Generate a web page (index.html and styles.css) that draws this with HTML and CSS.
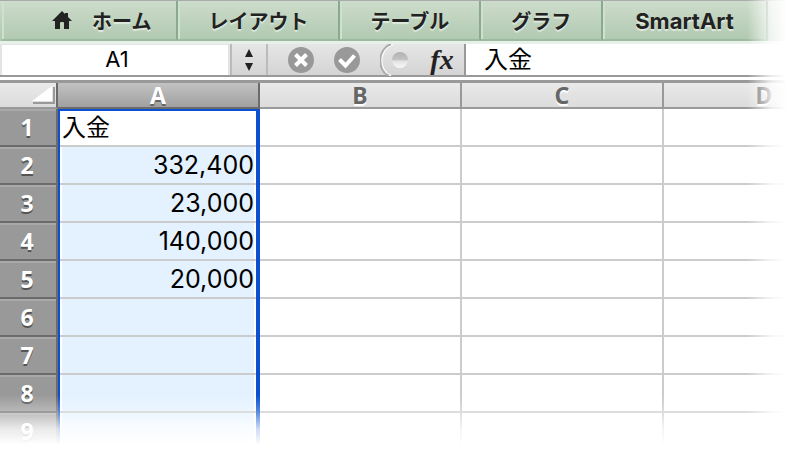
FILE: index.html
```html
<!DOCTYPE html>
<html lang="ja">
<head>
    <meta charset="UTF-8">
    <meta name="viewport" content="width=device-width, initial-scale=1.0">
    <title>入金</title>
    <link rel="stylesheet" href="styles.css">
</head>
<body>
    <div class="window">
        <nav class="tabs">
            <button type="button" class="tab home">
                <svg width="20" height="18" viewBox="0 0 20 18"><path d="M10 0 0 10h3v8h5v-6q0-1 1-1h2q1 0 1 1v6h5v-8h3l-4-4V2h-3v1z" fill="#222"/></svg>
                ホーム
            </button>
            <button type="button" class="tab">レイアウト</button>
            <button type="button" class="tab">テーブル</button>
            <button type="button" class="tab">グラフ</button>
            <button type="button" class="tab">SmartArt</button>
        </nav>

        <div class="formula-bar">
            <input type="text" class="name-box" aria-label="名前ボックス" value="A1">
            <button type="button" class="stepper" aria-label="セルの選択">
                <svg width="10" height="22" viewBox="0 0 10 22"><path d="M5 0 9 8H1zM1 14h8l-4 8z" fill="#222"/></svg>
            </button>
            <div class="tools">
                <button type="button" aria-label="キャンセル">
                    <svg width="26" height="26" viewBox="0 0 26 26"><circle cx="13" cy="13" r="13" fill="#999"/><path d="m7.500 7.500 11 11m0-11-11 11" stroke="#fff" stroke-width="4"/></svg>
                </button>
                <button type="button" aria-label="入力">
                    <svg width="26" height="26" viewBox="0 0 26 26"><circle cx="13" cy="13" r="13" fill="#999"/><path d="m5.500 12.500 6 6 9-10" fill="none" stroke="#fff" stroke-width="4"/></svg>
                </button>
                <svg class="toggle" width="30" height="32" viewBox="0 0 30 32">
                    <defs>
                        <linearGradient id="knob" x2="0" y2="1">
                            <stop offset="0" stop-color="#b2b2b2"/>
                            <stop offset=".5" stop-color="#c4c4c4"/>
                            <stop offset=".55" stop-color="#e0e2e4"/>
                            <stop offset="1" stop-color="#f6f8fa"/>
                        </linearGradient>
                    </defs>
                    <path d="M13 0C-2 5-2 27 11 32" fill="none" stroke="#fafafa" stroke-width="2"/>
                    <path d="M11 0C-3 5-3 27 9 32" fill="none" stroke="#aaa" stroke-width="2"/>
                    <circle cx="20" cy="16" r="8" fill="url(#knob)"/>
                </svg>
                <button type="button" class="fx">fx</button>
            </div>
            <input type="text" class="formula" aria-label="数式" value="入金">
        </div>

        <div class="sheet">
            <table>
                <colgroup>
                    <col class="col-head">
                    <col span="4" class="col-data">
                </colgroup>
                <thead>
                    <tr>
                        <th class="corner"><svg width="23" height="18" viewBox="0 0 23 18"><path d="M22 1v16H1" fill="none" stroke="#999" stroke-width="2"/><path d="M20 0v15H0z" fill="#fff"/></svg></th>
                        <th class="active">A</th>
                        <th>B</th>
                        <th>C</th>
                        <th>D</th>
                    </tr>
                </thead>
                <tbody>
                    <tr><th>1</th><td>入金</td><td></td><td></td><td></td></tr>
                    <tr><th>2</th><td class="selected">332,400</td><td></td><td></td><td></td></tr>
                    <tr><th>3</th><td class="selected">23,000</td><td></td><td></td><td></td></tr>
                    <tr><th>4</th><td class="selected">140,000</td><td></td><td></td><td></td></tr>
                    <tr><th>5</th><td class="selected">20,000</td><td></td><td></td><td></td></tr>
                    <tr><th>6</th><td class="selected"></td><td></td><td></td><td></td></tr>
                    <tr><th>7</th><td class="selected"></td><td></td><td></td><td></td></tr>
                    <tr><th>8</th><td class="selected"></td><td></td><td></td><td></td></tr>
                    <tr><th>9</th><td class="selected"></td><td></td><td></td><td></td></tr>
                </tbody>
            </table>
            <div class="selection"></div>
        </div>
    </div>
</body>
</html>
```
FILE: styles.css
```css
* {
    box-sizing: border-box;
}
body {
    margin: 0;
    background-color: #fff;
    font-family: 'Noto Sans CJK JP', sans-serif;
    color: #000;
}
button, input {
    font-family: inherit;
    border: none;
    padding: 0;
    margin: 0;
    background: none;
}
svg {
    display: block;
}
.window {
    position: relative;
    overflow: hidden;
}
/* fade out to the right and to the bottom */
.window::before, .window::after {
    content: "";
    position: absolute;
    right: 0;
    bottom: 0;
    z-index: 2;
    pointer-events: none;
}
.window::before {
    top: 0;
    width: 44px;
    background: linear-gradient(to right, rgba(255,255,255,0), rgba(255,255,255,0.8) 24px, #fff 40px);
}
.window::after {
    left: 0;
    height: 56px;
    background: linear-gradient(to bottom, rgba(255,255,255,0), rgba(255,255,255,0.3) 16px, rgba(255,255,255,0.8) 34px, #fff 50px);
}

.tabs {
    display: flex;
    height: 44px;
    padding-left: 2px;
    border-top: 1px solid #aaa;
    border-bottom: 3px solid #e8f0ea;
    background: linear-gradient(#cddccb, #b0c8b0);
}
.tab {
    display: flex;
    align-items: center;
    padding: 0 30px;
    border-right: 2px solid #8ba98d;
    border-bottom: 2px solid #9dbb9f;
    box-shadow: inset 2px 0 #cfe0cf;
    color: #222;
    font-size: 20px;
    font-weight: bold;
    text-shadow: 0 2px 1px #dfeadf;
    white-space: nowrap;
}
.tab:last-child {
    font-family: Inter, sans-serif;
    font-size: 22px;
    padding: 2px 32px 0;
}
.home {
    gap: 20px;
    padding: 0 25px 0 50px;
}

.formula-bar {
    display: flex;
    height: 33px;
    border-bottom: 2px solid #999;
    background: linear-gradient(#e6e6e6, #d4d4d4);
}
.name-box {
    width: 230px;
    border: solid #e4e4e4;
    border-width: 1px 2px 0;
    padding: 0 0 2px 4px;
    background-color: #fff;
    font-family: Inter, sans-serif;
    font-size: 22px;
    text-align: center;
}
.stepper {
    display: flex;
    align-items: center;
    justify-content: center;
    width: 38px;
    border: solid #bbb;
    border-width: 0 2px;
}
.tools {
    display: flex;
    align-items: center;
    gap: 20px;
    padding: 0 8px 0 20px;
    border-right: 2px solid #999;
}
.toggle {
    margin-right: -2px;
}
.fx {
    width: 28px;
    color: #222;
    font: italic bold 28px/30px 'Liberation Serif', serif;
}
.formula {
    flex: 1;
    min-width: 0;
    padding: 0 0 4px 18px;
    background-color: #fff;
    font-size: 24px;
}

.sheet {
    position: relative;
    margin-top: 3px;
    border-top: 3px solid #999;
}
table {
    width: 866px;
    table-layout: fixed;
    border-spacing: 0;
}
.col-head {
    width: 58px;
}
.col-data {
    width: 202px;
}
th, td {
    height: 38px;
    padding: 0 4px 2px;
    border: solid #ccc;
    border-width: 0 2px 2px 0;
    font-size: 24px;
    line-height: 32px;
    text-align: left;
}
th {
    font: bold 23px/24px 'Noto Sans', sans-serif;
    text-align: center;
}
thead th {
    height: 26px;
    padding: 0;
    border-color: #999;
    background: linear-gradient(#e9e9e9, #dcdcdc);
    color: #666;
    line-height: 22px;
    text-shadow: 0 2px #fff;
}
thead .corner {
    border-right-color: #6b6b6b;
    padding-left: 32px;
}
thead .active {
    border-color: #6b6b6b;
    background: linear-gradient(#c2c2c2, #a0a0a0);
    color: #fff;
    text-shadow: 0 2px #666;
}
tbody th {
    padding: 0 6px 0 4px;
    border-color: #6b6b6b;
    background-color: #999;
    box-shadow: inset 0 2px #a9a9a9;
    color: #fff;
    text-shadow: 0 2px #555;
}
td.selected {
    padding: 0 4px;
    background: linear-gradient(#e4f2ff, #e4f2ff) center / calc(100% - 8px) 100% no-repeat;
    font-family: Inter, sans-serif;
    font-size: 25px;
    text-align: right;
}
.selection {
    position: absolute;
    top: 26px;
    bottom: 0;
    left: 58px;
    width: 202px;
    border: solid #0a50d0;
    border-width: 2px 4px 0 2px;
}
```
